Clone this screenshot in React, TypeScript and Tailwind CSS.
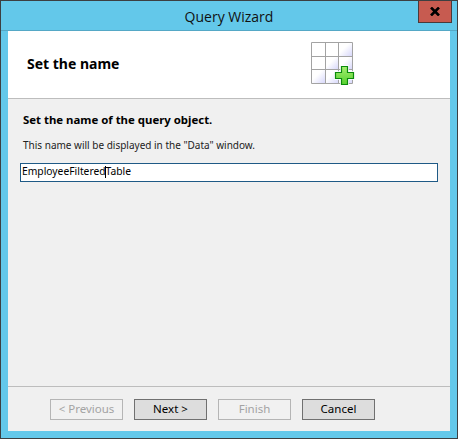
export default function App() {
  const btn = "w-[73px] h-[21px] border flex items-center justify-center text-[11.5px] pb-px";
  return (
    <div className="w-[458px] h-[439px] bg-[#63c8ea] border border-[#3c3f41] flex flex-col overflow-hidden text-black" style={{ fontFamily: '"Noto Sans", sans-serif' }}>
      <div className="relative h-[30px] shrink-0 flex items-center justify-center border-b border-[#55a8c6]">
        <span className="text-[14px] pt-[2px] text-[#111]" style={{ fontFamily: '"Open Sans", sans-serif' }}>Query Wizard</span>
        <div className="absolute top-0 right-[5px] w-[34px] h-[22px] bg-[#c75b50] border border-[#4a3a3a] border-t-0 flex items-center justify-center">
          <svg width="10" height="9" viewBox="0 0 10 9"><path d="M1 0.5 L9 8.5 M9 0.5 L1 8.5" stroke="#000" strokeWidth="2.6" /></svg>
        </div>
      </div>
      <div className="mx-[7px] h-[400px] bg-[#f0f0f0] flex flex-col">
        <div className="h-[68px] shrink-0 bg-white border-b border-[#bdbdbd] flex items-center">
          <span className="ml-[19px] w-[284px] text-[14px] font-bold -mt-[3px]">Set the name</span>
          <svg width="46" height="46" viewBox="0 0 46 46" className="mt-[1px] shrink-0">
            <defs>
              <linearGradient id="g" x1="0" y1="0" x2="1" y2="1"><stop offset="0.4" stopColor="#ffffff" /><stop offset="1" stopColor="#d8d8fb" /></linearGradient>
              <linearGradient id="p" x1="0" y1="0" x2="0" y2="1"><stop offset="0" stopColor="#a6ee70" /><stop offset="1" stopColor="#55d02e" /></linearGradient>
            </defs>
            <rect x="1" y="1" width="13" height="13" fill="#fff" /><rect x="15" y="1" width="12" height="13" fill="#fff" /><rect x="28" y="1" width="13" height="13" fill="url(#g)" />
            <rect x="1" y="15" width="13" height="12" fill="#fff" /><rect x="15" y="15" width="12" height="12" fill="url(#g)" /><rect x="28" y="15" width="13" height="12" fill="url(#g)" />
            <rect x="1" y="28" width="13" height="13" fill="url(#g)" /><rect x="15" y="28" width="12" height="13" fill="url(#g)" /><rect x="28" y="28" width="13" height="13" fill="url(#g)" />
            <path d="M0.5 0.5H41.5V41.5H0.5Z M14.5 0.5V41.5 M27.5 0.5V41.5 M0.5 14.5H41.5 M0.5 27.5H41.5" fill="none" stroke="#a3a3a3" />
            <path d="M29.5 23.5h8v6h6v8h-6v6h-8v-6h-6v-8h6z" fill="none" stroke="#fff" strokeWidth="0.8" />
            <path d="M30.5 24.5h6v6h6v6h-6v6h-6v-6h-6v-6h6z" fill="url(#p)" stroke="#0b8a0b" strokeWidth="1.2" />
          </svg>
        </div>
        <div className="flex-1 px-[12px] flex flex-col">
          <div className="pl-[3px] mt-[14px] text-[11.4px] font-bold leading-[14px]">Set the name of the query object.</div>
          <div className="pl-[3px] mt-[11px] text-[10px] leading-[14px] text-[#222]">This name will be displayed in the "Data" window.</div>
          <div className="relative mt-[11px] w-[418px] h-[19px] bg-white border border-[#1f5a86] flex items-center pl-[1px] pb-px text-[10.3px]">
            EmployeeFilteredTable
            <span className="absolute left-[84px] top-[2px] w-px h-[12px] bg-black" />
          </div>
        </div>
        <div className="h-[45px] shrink-0 border-t border-[#bdbdbd] flex items-start gap-[11px] pl-[42px] pt-[12px]">
          <div className={btn + " border-[#b5b5b5] bg-[#f1f1f1] text-[#a3a3a3]"}>&lt; Previous</div>
          <div className={btn + " border-[#707070] bg-[#dddddd]"}>Next &gt;</div>
          <div className={btn + " border-[#b5b5b5] bg-[#f1f1f1] text-[#a3a3a3]"}>Finish</div>
          <div className={btn + " border-[#707070] bg-[#dddddd]"}>Cancel</div>
        </div>
      </div>
    </div>
  );
}
